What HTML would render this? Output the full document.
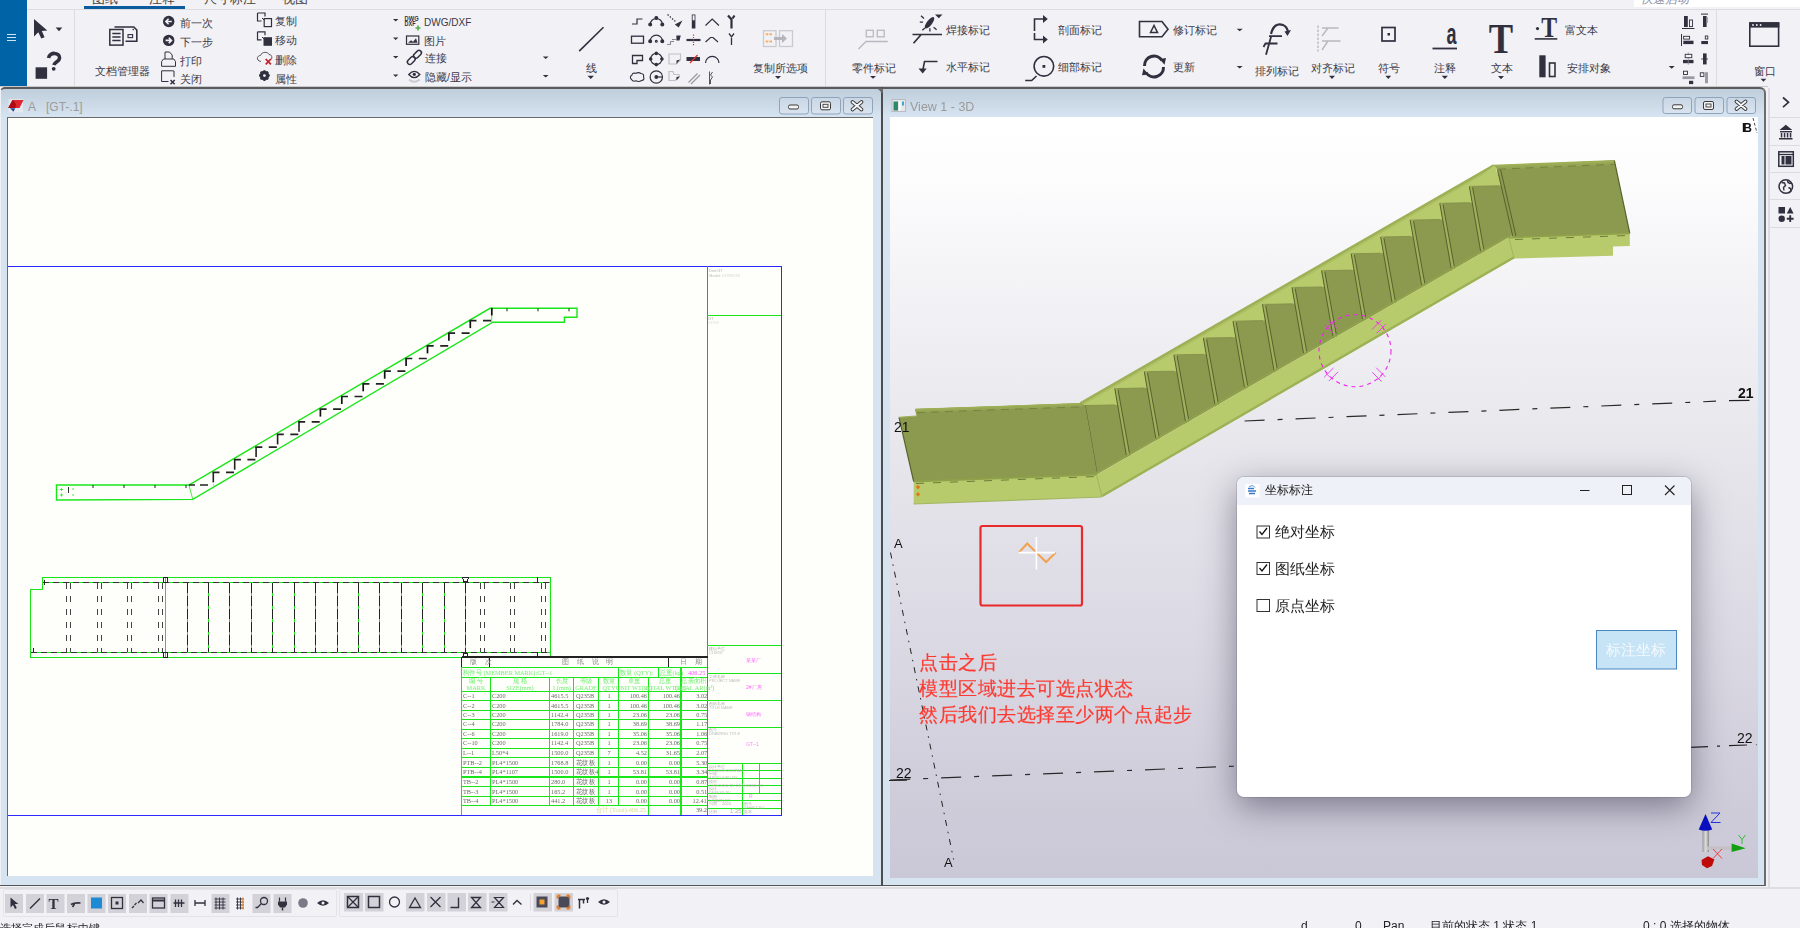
<!DOCTYPE html>
<html><head><meta charset="utf-8">
<style>
*{box-sizing:border-box;margin:0;padding:0}
html,body{width:1800px;height:928px;overflow:hidden}
body{position:relative;background:#f2f1f6;font-family:"Liberation Sans",sans-serif;color:#2b2b3a}
.a{position:absolute;white-space:nowrap}
.t{position:absolute;font-size:11px;line-height:12px;white-space:nowrap;color:#3a3a48}
.tri{position:absolute;width:0;height:0;border-left:3px solid transparent;border-right:3px solid transparent;border-top:3px solid #2f2f3d}
svg{position:absolute;left:0;top:0}
</style></head><body>

<!-- top tabs -->
<div class="a" style="left:0;top:0;width:1800px;height:9px;background:#f2f1f6;overflow:hidden">
  <div class="t" style="left:92px;top:-8px;font-size:13px;line-height:14px;color:#444">图纸</div>
  <div class="t" style="left:149px;top:-8px;font-size:13px;line-height:14px;color:#444">注释</div>
  <div class="t" style="left:204px;top:-8px;font-size:13px;line-height:14px;color:#444">尺寸标注</div>
  <div class="t" style="left:282px;top:-8px;font-size:13px;line-height:14px;color:#444">视图</div>
  <div class="a" style="left:1634px;top:0;width:166px;height:7px;background:#fff"></div>
  <div class="t" style="left:1641px;top:-7px;font-size:12px;color:#8a8aa0;font-style:italic">快速启动</div>
</div>
<div class="a" style="left:84px;top:6px;width:101px;height:3px;background:#0b5c9e"></div>
<div class="a" style="left:27px;top:9px;width:1773px;height:1px;background:#dddce2"></div>
<!-- sidebar -->
<div class="a" style="left:0;top:0;width:27px;height:86px;background:#0063a6"></div>
<div class="a" style="left:7px;top:34px;width:9px;height:1px;background:#cfe3f3;box-shadow:0 3px 0 #cfe3f3,0 6px 0 #cfe3f3"></div>

<!-- ribbon separators -->
<div class="a" style="left:74px;top:10px;width:1px;height:76px;background:#dcdbe1"></div>
<div class="a" style="left:1716px;top:10px;width:1px;height:76px;background:#dcdbe1"></div>


<!-- RIBBON ICONS -->
<svg width="1800" height="88" style="left:0;top:0" fill="none" stroke="#31303f" stroke-width="1.3">
  <!-- select arrow -->
  <path d="M34,19 L34,36.5 L38.3,32.2 L41.3,38.6 L44.6,37.2 L41.8,31 L47.3,30.6 Z" fill="#31303f" stroke="none"/>
  <path d="M55.7,27.6 L62.3,27.6 L59,31.2 Z" fill="#31303f" stroke="none"/>
  <!-- help -->
  <rect x="35.6" y="67.3" width="11.5" height="11.5" fill="#31303f" stroke="none"/>
  <path d="M48.6,58 C49.5,51.8 59.8,52 59.6,58 C59.5,61.5 54.8,61.5 53.8,65" stroke-width="3.6"/>
  <circle cx="53.7" cy="68.8" r="1.9" fill="#31303f" stroke="none"/>
  <!-- doc manager -->
  <path d="M114.5,27 L133.8,27 L136.8,30 L136.8,41.3 L125.5,41.3" stroke-width="1.6"/><circle cx="133.2" cy="29.6" r="0.8" fill="#31303f" stroke="none"/>
  <rect x="109.8" y="29.5" width="13.2" height="15.6" stroke-width="1.5" fill="#f2f1f6"/>
  <path d="M112.3,33.5h8.3M112.3,37h8.3M112.3,40.5h8.3" stroke-width="1.3"/>
  <rect x="128" y="34.6" width="4.6" height="3" stroke-width="1.1"/>
  <!-- prev/next -->
  <circle cx="168.7" cy="21.5" r="5.7" fill="#31303f" stroke="none"/>
  <path d="M171.8,21.5h-5.6M168.6,18.8l-2.7,2.7l2.7,2.7" stroke="#f2f1f6" stroke-width="1.6"/>
  <circle cx="168.7" cy="40.4" r="5.7" fill="#31303f" stroke="none"/>
  <path d="M165.6,40.4h5.6M168.8,37.7l2.7,2.7l-2.7,2.7" stroke="#f2f1f6" stroke-width="1.6"/>
  <!-- print -->
  <path d="M165,59 L165,52 L169.5,52 L172.2,55 L172.2,59 M161.6,66.3 L161.6,61.5 L163.5,59 L173.8,59 L175.5,61.5 L175.5,66.3 Z" stroke-width="1"/>
  <!-- close -->
  <path d="M174,77 L174,71 L172.5,70.8 L161.6,70.8 L161.6,81.5 L168.5,81.5" stroke-width="1"/>
  <path d="M170.5,80l4.2,4.2M174.7,80l-4.2,4.2" stroke-width="1.5"/>
  <!-- copy / move -->
  <path d="M257.5,13 h7.5 v3.5 M257.5,13 v8 h4" stroke-width="1.2"/>
  <rect x="264.2" y="18.6" width="7.3" height="8" stroke-width="1.2"/>
  <path d="M262,18 l2.5,2.5" stroke-width="1"/>
  <path d="M257.5,31.8 h7.5 v3.5 M257.5,31.8 v8 h4" stroke-width="1.2"/>
  <rect x="263.5" y="37.2" width="8.5" height="8.6" fill="#31303f" stroke="none"/>
  <path d="M262,37 l2.5,2.5" stroke-width="1"/>
  <!-- delete cloud -->
  <path d="M261,61.5 C256,61 256.5,55.5 260.5,55.5 C261.5,51.5 268,51.5 269,54.5 C272,54.5 272.5,58 271,59.5" stroke="#555" stroke-width="1"/>
  <path d="M265.7,59l5.2,5.4M270.9,59l-5.2,5.4" stroke="#c0262b" stroke-width="1.8"/>
  <!-- gear -->
  <circle cx="264.4" cy="75.6" r="3.6" stroke-width="2.4"/>
  <path d="M264.4,70.2v10.8M259,75.6h10.8M260.6,71.8l7.6,7.6M268.2,71.8l-7.6,7.6" stroke-width="2"/>
  <circle cx="264.4" cy="75.6" r="1.4" fill="#f2f1f6" stroke="none"/>
  <!-- triangles col3 -->
  <path d="M393,19h5.4l-2.7,2.6z M393,37.5h5.4l-2.7,2.6z M393,56h5.4l-2.7,2.6z M393,74.5h5.4l-2.7,2.6z M542.8,56.6h5.8l-2.9,2.4z M542.8,75h5.8l-2.9,2.6z M587.5,75.8h6.5l-3.25,3.2z" fill="#31303f" stroke="none"/>
  <!-- dwg icon -->
  <text x="404.6" y="20.5" font-family="Liberation Sans" font-size="6.5" font-weight="bold" fill="#31303f" stroke="none" textLength="14" lengthAdjust="spacingAndGlyphs">DWG</text>
  <text x="404.6" y="25.5" font-family="Liberation Sans" font-size="6.5" font-weight="bold" fill="#31303f" stroke="none" textLength="11" lengthAdjust="spacingAndGlyphs">DXF</text>
  <path d="M418,25.5v5M415.5,28h5" stroke="#54b04a" stroke-width="1.6"/>
  <!-- picture -->
  <rect x="406.5" y="36" width="12.3" height="8.3" stroke-width="1.2"/>
  <path d="M408,42.8 l3,-2.5 l2,1.5 l3,-3.5 l1.5,4.5 z" fill="#31303f" stroke="none"/>
  <!-- link -->
  <g transform="rotate(-45 414.4 57.4)" stroke-width="1.5"><rect x="405.5" y="55" width="9" height="4.8" rx="2.4"/><rect x="414.3" y="55" width="9" height="4.8" rx="2.4"/></g>
  <!-- eye -->
  <path d="M408.8,74.5 Q414.3,68.3 419.8,74.5 Q414.3,80.7 408.8,74.5Z" stroke-width="1.4"/>
  <circle cx="414.3" cy="74.3" r="1.6" fill="#31303f" stroke="none"/>
  <path d="M409,79.5 Q414.3,84 419.6,79.5" stroke="#c9c9cf" stroke-width="2"/>
  <!-- line -->
  <path d="M579.2,51.1 L603.5,27.3" stroke-width="1.6"/>
  <!-- grid icons -->
  <g stroke-width="1.2">
    <path d="M632,24h5v-5h5.5"/>
    <path d="M650.2,24.6 A6.1,6.1 0 0 1 662.4,24.6"/><circle cx="650.2" cy="24.6" r="1.4" fill="#31303f"/><circle cx="656.3" cy="18" r="1.4" fill="#31303f"/><circle cx="662.3" cy="24.6" r="1.4" fill="#31303f"/>
    <path d="M667.5,14.5 l8,7" stroke-dasharray="1.5,1.5"/><path d="M676,24.5 l5,-2.5 l-2.5,4.5 z" fill="#31303f"/>
    <rect x="691.8" y="14.5" width="3.6" height="14" fill="#31303f" stroke="none"/><rect x="692.6" y="15.3" width="2" height="5" fill="#f2f1f6" stroke="none"/>
    <path d="M705.5,25.5 l6.7,-6.5 l6.7,6.5"/>
    <path d="M728,15.5 l3.5,4 v9 M734.5,15.5 l-2,3" stroke-width="2.2"/>
    <rect x="631.5" y="36.2" width="12" height="7" stroke-width="1.3"/>
    <path d="M650.2,41.2 A6.1,6.1 0 0 1 662.4,41.2"/><circle cx="650.2" cy="41.2" r="1.4" fill="#31303f"/><circle cx="656.3" cy="41.2" r="0.9"/><circle cx="662.3" cy="41.2" r="1.4" fill="#31303f"/>
    <path d="M667.5,44.5h3v-3h2.5v-2h3" stroke-dasharray="1,1"/><path d="M677,36 h3 l-1,4 h-2z" fill="#31303f"/>
    <path d="M686.5,40h14" stroke-width="2.2"/><path d="M693.5,34.5v12" stroke="#d33" stroke-dasharray="1.2,1.2"/>
    <path d="M705.5,42 l5,-4.5 h2.5 l5,4.5"/>
    <path d="M731.5,38v7 M729,33.5 l2.5,3.5 l2.5,-3.5" stroke-width="1.3"/>
    <path d="M632.5,63.5 v-8 h10 v5 h-5.5 v3z" stroke-width="1.3"/>
    <circle cx="656.3" cy="59" r="5.6"/><circle cx="656.3" cy="53.4" r="1.2" fill="#31303f"/><circle cx="650.7" cy="59" r="1.2" fill="#31303f"/><circle cx="661.9" cy="59" r="1.2" fill="#31303f"/><circle cx="656.3" cy="64.6" r="1.2" fill="#31303f"/>
    <path d="M669,54 h11.5 v6 l-4,4 h-7.5z" stroke="#c0c0c6"/><path d="M680,59.5 l-3.5,4.5 v-3.5z" fill="#31303f" stroke="none"/>
    <rect x="686.5" y="57" width="13.5" height="4" fill="#31303f" stroke="none"/><path d="M690,63 l7.5,-8" stroke="#d33"/>
    <path d="M705.5,63 a6.7,6.5 0 0 1 13.5,0"/>
    <path d="M631.5,79.5 Q629,77 632,75 Q632.5,72.5 636,73.3 Q638.5,71.8 641,73.5 Q644.5,74 643.5,77 Q645,80 641.5,80.5 Q639,82.3 636,80.8 Q633,82 631.5,79.5z" stroke-width="1.1"/>
    <circle cx="656.3" cy="77" r="6.2"/><circle cx="656.3" cy="77" r="1.3" fill="#31303f"/><path d="M656.3,77h6"/>
    <path d="M669,71.5 h4 l1,3 h5 v2 l-4,4 h-6z" stroke="#c0c0c6"/><path d="M680,76.5 l-3.5,4 v-3.5z" fill="#31303f" stroke="none"/>
    <path d="M688.5,82.5 l9,-9 M691,84 l9,-9" stroke="#999"/>
    <path d="M709.5,71.5 v13 M712.5,72 l-2,3 l2,2 l-2,3 v4" stroke="#555" stroke-width="1"/>
  </g>
  <!-- copy selected -->
  <rect x="763.5" y="30.7" width="12.5" height="15.8" stroke="#cacad0" stroke-width="1.3"/>
  <rect x="779.5" y="30.7" width="13" height="15.8" stroke="#cacad0" stroke-width="1.3"/>
  <path d="M774,38.5h9" stroke="#b5b5bb" stroke-width="3"/><path d="M782,34l5,4.5l-5,4.5z" fill="#b5b5bb" stroke="none"/>
  <path d="M765.8,34.3h2.5M769.5,34.3h2.5M765.8,41.4h2.5M769.5,41.4h2.5" stroke="#f5b062" stroke-width="2"/>
  <path d="M775,76h6l-3,3z M870,76h6l-3,2.8z M1329,75.8h6l-3,3.2z M1385.4,75.8h5.8l-2.9,3.2z M1441.7,75.8h6.3l-3.15,3.2z M1498,76h6l-3,3.3z M1236.7,28.7h6l-3,2.6z M1236.7,66h6l-3,2.6z M1668.7,66h6l-3,2.7z M1760.6,78.8h5.7l-2.85,2.9z" fill="#31303f" stroke="none"/>
  <!-- separator -->
  <path d="M825.5,10v76" stroke="#dcdbe1" stroke-width="1"/>
  <!-- part mark -->
  <g stroke="#b9b9bf" stroke-width="1.3"><rect x="866.3" y="30.3" width="7" height="6.5"/><rect x="877.2" y="30.3" width="7" height="6.5"/><path d="M858.5,49 l7.5,-7.5 h21.7"/></g>
  <!-- weld -->
  <path d="M912.5,34.5 h29.5 M913.5,43.3 l7.5,-8.5" stroke-width="1.7"/>
  <ellipse cx="929.5" cy="22.8" rx="7" ry="2.6" transform="rotate(-52 929.5 22.8)" fill="#31303f" stroke="none"/>
  <path d="M935,14.5h7.5l-3.7,3.7z" fill="#31303f" stroke="none"/>
  <path d="M921,15.8 l3,2.8 M919.8,22.2 h3.2 M922.3,30.3 l2.6,-2.3 M929.9,28.3 v3.2 M933.6,27.2 l3,2.6" stroke-width="1.3"/>
  <!-- level mark -->
  <path d="M937.5,61.5 h-13 l-1.8,9.5" stroke-width="1.6"/><path d="M918.5,68.5 l4.2,5 l4,-5z" fill="#31303f" stroke="none"/>
  <!-- section mark -->
  <path d="M1034.5,31 v-12 h9 M1034.5,33 v6.5 h9" stroke-width="1.6"/>
  <path d="M1043,15 l4.8,4 l-4.8,4z M1043,35.5 l4.8,4 l-4.8,4z" fill="#31303f" stroke="none"/>
  <!-- detail mark -->
  <circle cx="1043.9" cy="66.3" r="9.8" stroke-width="1.6"/><rect x="1042.5" y="65" width="2.8" height="2.8" fill="#31303f" stroke="none"/>
  <path d="M1025.2,80.5 h6.5 l4.8,-4.5" stroke-width="1.6"/>
  <!-- revision -->
  <path d="M1139.5,21.5 h22.5 l6,7.8 l-6,7.5 h-22.5z" stroke-width="1.6"/>
  <path d="M1150.5,32.5 l3.5,-7 l3.5,7z" stroke-width="1.5"/>
  <!-- update -->
  <path d="M1144.5,66 a9.5,9.5 0 0 1 17.5,-5.5 M1163.5,67 a9.5,9.5 0 0 1 -17.5,5.5" stroke-width="3"/>
  <path d="M1159.5,59 l6.5,-1 l-1.5,6.8z M1148.5,74.5 l-6.5,0.8 l1.5,-6.8z" fill="#31303f" stroke="none"/>
  <!-- arrange mark -->
  <path d="M1271,34 Q1274,22 1283,25 Q1287,26.5 1288,32" stroke-width="2.2"/><path d="M1284.5,31.5 l6.5,-1.5 l-3.5,6z" fill="#31303f" stroke="none"/>
  <path d="M1269,36.2 h13 M1263.5,47 l2,-3.5 h12 M1266,54.7 l5.2,-18.5" stroke-width="1.8"/>
  <!-- align mark -->
  <g stroke="#b8b8be" stroke-width="1.4"><path d="M1318,25.5v26" stroke-dasharray="2.5,1.5"/><path d="M1322,28h16.5M1322,41h18.5M1322,36l6,-8M1322,50l6,-9"/></g>
  <!-- symbol -->
  <rect x="1382" y="27.5" width="13" height="13.5" stroke-width="1.7"/><rect x="1387.5" y="33" width="2.5" height="2.5" fill="#31303f" stroke="none"/>
  <!-- note a -->
  <path d="M1432.5,48.5h24.5" stroke-width="1.8"/>
  <text x="1446.5" y="44" font-family="Liberation Sans" font-weight="bold" font-size="29" fill="#31303f" stroke="none" transform="translate(1446.5 0) scale(0.62 1) translate(-1446.5 0)">a</text>
  <!-- T -->
  <text x="1488.7" y="52.7" font-family="Liberation Serif" font-weight="bold" font-size="43" fill="#31303f" stroke="none" transform="translate(1488.7 0) scale(0.85 1) translate(-1488.7 0)">T</text>
  <text x="1541.3" y="36.8" font-family="Liberation Serif" font-weight="bold" font-size="29" fill="#31303f" stroke="none" transform="translate(1541.3 0) scale(0.82 1) translate(-1541.3 0)">T</text>
  <circle cx="1537.5" cy="28.6" r="1.6" fill="#31303f" stroke="none"/>
  <path d="M1534.7,38.9h22.6" stroke-width="1.6"/>
  <!-- arrange objects -->
  <rect x="1539.3" y="55.3" width="6.3" height="22" fill="#31303f" stroke="none"/>
  <rect x="1549.5" y="63" width="5.5" height="13.5" stroke-width="1.6"/>
  <!-- align icons -->
  <g fill="#31303f" stroke="none">
    <rect x="1684" y="16" width="3.8" height="11"/><rect x="1682" y="28" width="12.5" height="1"/>
    <rect x="1703" y="16" width="3.6" height="11"/><rect x="1701" y="13.6" width="7" height="1"/><rect x="1706.6" y="17" width="1.2" height="6" fill="#9a9aa4"/>
    <rect x="1681" y="34" width="1" height="12"/><rect x="1683.3" y="40.7" width="10.2" height="3.4"/>
    <rect x="1701.3" y="41" width="6.7" height="3.1"/>
    <rect x="1683" y="59.9" width="10.5" height="3.3"/><rect x="1687.8" y="52.5" width="0.8" height="12.3" fill="#8a8a96"/>
    <rect x="1703" y="53.4" width="3.6" height="11"/><rect x="1701" y="58.6" width="7" height="0.8"/>
    <rect x="1682.5" y="76.3" width="12" height="2.8" fill="#9a9aa4"/><rect x="1689" y="80.8" width="4.2" height="3.3"/>
    <rect x="1705" y="72.2" width="3" height="11" fill="#9a9aa4"/>
  </g>
  <g fill="#f4f4f8" stroke="#31303f" stroke-width="0.9">
    <rect x="1689.5" y="20" width="3" height="6.6"/>
    <rect x="1683.6" y="36.3" width="6" height="2.8"/>
    <rect x="1705.3" y="36" width="2.5" height="3"/>
    <rect x="1685.2" y="54.3" width="6.6" height="3.4"/>
    <rect x="1683.5" y="71.2" width="4" height="3.3"/>
    <rect x="1700.3" y="72.8" width="3.6" height="3.6"/>
  </g>
  <!-- window -->
  <rect x="1749.8" y="23" width="28.8" height="23.2" stroke-width="1.6"/>
  <rect x="1749" y="22.3" width="30.3" height="5.3" fill="#31303f" stroke="none"/>
  <circle cx="1753" cy="25" r="0.9" fill="#f2f1f6" stroke="none"/><circle cx="1756.8" cy="25" r="0.9" fill="#f2f1f6" stroke="none"/><circle cx="1760.6" cy="25" r="0.9" fill="#f2f1f6" stroke="none"/>
</svg>
<div class="t" style="left:95px;top:65px;font-size:10.5px">文档管理器</div>
<div class="t" style="left:180px;top:17px;font-size:10.5px">前一次</div>
<div class="t" style="left:180px;top:36px;font-size:10.5px">下一步</div>
<div class="t" style="left:180px;top:55px;font-size:10.5px">打印</div>
<div class="t" style="left:180px;top:73px;font-size:10.5px">关闭</div>
<div class="t" style="left:275px;top:15px;font-size:10.5px">复制</div>
<div class="t" style="left:275px;top:34px;font-size:10.5px">移动</div>
<div class="t" style="left:275px;top:54px;font-size:10.5px">删除</div>
<div class="t" style="left:275px;top:73px;font-size:10.5px">属性</div>
<div class="t" style="left:424px;top:16px;font-size:11px;transform:scaleX(.91);transform-origin:0 0">DWG/DXF</div>
<div class="t" style="left:424px;top:35px;font-size:10.5px">图片</div>
<div class="t" style="left:425px;top:52px;font-size:10.5px">连接</div>
<div class="t" style="left:425px;top:71px;font-size:10.5px">隐藏/显示</div>
<div class="t" style="left:586px;top:62px;font-size:10.5px">线</div>
<div class="t" style="left:753px;top:62px;font-size:10.5px">复制所选项</div>
<div class="t" style="left:852px;top:62px;font-size:10.5px">零件标记</div>
<div class="t" style="left:946px;top:24px;font-size:10.5px">焊接标记</div>
<div class="t" style="left:946px;top:61px;font-size:10.5px">水平标记</div>
<div class="t" style="left:1058px;top:24px;font-size:10.5px">剖面标记</div>
<div class="t" style="left:1058px;top:61px;font-size:10.5px">细部标记</div>
<div class="t" style="left:1173px;top:24px;font-size:10.5px">修订标记</div>
<div class="t" style="left:1173px;top:61px;font-size:10.5px">更新</div>
<div class="t" style="left:1255px;top:65px;font-size:10.5px">排列标记</div>
<div class="t" style="left:1311px;top:62px;font-size:10.5px">对齐标记</div>
<div class="t" style="left:1378px;top:62px;font-size:10.5px">符号</div>
<div class="t" style="left:1434px;top:62px;font-size:10.5px">注释</div>
<div class="t" style="left:1491px;top:62px;font-size:10.5px">文本</div>
<div class="t" style="left:1565px;top:24px;font-size:10.5px">富文本</div>
<div class="t" style="left:1567px;top:62px;font-size:10.5px">安排对象</div>
<div class="t" style="left:1754px;top:65px;font-size:10.5px">窗口</div>

<!-- dark line under ribbon -->
<div class="a" style="left:0;top:86px;width:1768px;height:1px;background:#c9c8cc"></div>

<!-- LEFT WINDOW -->
<div class="a" style="left:0;top:87px;width:882px;height:799px;background:linear-gradient(#bfcedc 0px,#d7e4f1 29px,#d6e3f0 30px);border-top:2px solid #5b5b5b;border-bottom:1px solid #555;border-top-left-radius:5px"></div>
<div class="a" style="left:0;top:89px;width:1px;height:796px;background:#eef2f7"></div>
<div class="a" style="left:7px;top:117px;width:866px;height:759px;background:#fefefa;border-top:1.5px solid #6a6a6a;border-left:1.5px solid #6a6a6a"></div>
<div class="t" style="left:28px;top:101px;font-size:12px;line-height:13px;color:#9b9b9b">A&nbsp;&nbsp;&nbsp;[GT-.1]</div>

<!-- DRAWING -->
<svg width="1800" height="928" style="left:0;top:0" fill="none" shape-rendering="crispEdges">
<path d="M8,266.5H781.5V815.5H8" stroke="#2a2aff" stroke-width="1.5"/>
<path d="M707.5,266V815" stroke="#8a7a10" stroke-width="1.3"/>
<path d="M707,315.5H781" stroke="#19e619" stroke-width="1.2"/>
<path d="M707,645.5H781" stroke="#19e619" stroke-width="1.2"/>
<path d="M707,673.5H781" stroke="#19e619" stroke-width="1.2"/>
<path d="M707,700.5H781" stroke="#19e619" stroke-width="1.2"/>
<path d="M707,727.5H781" stroke="#19e619" stroke-width="1.2"/>
<path d="M707,763.5H781" stroke="#19e619" stroke-width="1.2"/>
<path d="M707,770.5H781" stroke="#19e619" stroke-width="1.2"/>
<path d="M707,778.5H781" stroke="#19e619" stroke-width="1.2"/>
<path d="M707,785.5H781" stroke="#19e619" stroke-width="1.2"/>
<path d="M707,793.5H781" stroke="#19e619" stroke-width="1.2"/>
<path d="M707,800.5H781" stroke="#19e619" stroke-width="1.2"/>
<path d="M707,808.5H781" stroke="#19e619" stroke-width="1.2"/>
<path d="M742.5,763V815M759.5,763V793" stroke="#19e619" stroke-width="1.2"/>
</svg>
<svg width="1800" height="928" style="left:0;top:0" fill="none">
<path d="M56.5,485H188.9L490,308.3H577V317.2H564.4V322.2H492.8L192.8,499.4L56.5,500Z" stroke="#19e619" stroke-width="1.4"/>
<path d="M188.9,485L192.8,499.4M491.7,308.5V322" stroke="#19e619" stroke-width="0.8"/>
<path d="M213.3,472.4V485.0" stroke="#222" stroke-width="1.6" stroke-dasharray="10,3"/>
<path d="M212.5,472.4H234.7" stroke="#222" stroke-width="1.7" stroke-dasharray="7,6.5,8,10"/>
<path d="M234.7,459.7V472.4" stroke="#222" stroke-width="1.6" stroke-dasharray="10,3"/>
<path d="M233.9,459.7H256.1" stroke="#222" stroke-width="1.7" stroke-dasharray="7,6.5,8,10"/>
<path d="M256.1,447.1V459.7" stroke="#222" stroke-width="1.6" stroke-dasharray="10,3"/>
<path d="M255.3,447.1H277.6" stroke="#222" stroke-width="1.7" stroke-dasharray="7,6.5,8,10"/>
<path d="M277.6,434.4V447.1" stroke="#222" stroke-width="1.6" stroke-dasharray="10,3"/>
<path d="M276.8,434.4H299.0" stroke="#222" stroke-width="1.7" stroke-dasharray="7,6.5,8,10"/>
<path d="M299.0,421.8V434.4" stroke="#222" stroke-width="1.6" stroke-dasharray="10,3"/>
<path d="M298.2,421.8H320.4" stroke="#222" stroke-width="1.7" stroke-dasharray="7,6.5,8,10"/>
<path d="M320.4,409.1V421.8" stroke="#111" stroke-width="1.7" stroke-dasharray="7.5,6"/>
<path d="M319.6,409.1H341.8" stroke="#222" stroke-width="1.7" stroke-dasharray="7,6.5,8,10"/>
<path d="M341.8,396.5V409.1" stroke="#111" stroke-width="1.7" stroke-dasharray="7.5,6"/>
<path d="M341.0,396.5H363.2" stroke="#222" stroke-width="1.7" stroke-dasharray="7,6.5,8,10"/>
<path d="M363.2,383.8V396.4" stroke="#111" stroke-width="1.7" stroke-dasharray="7.5,6"/>
<path d="M362.4,383.8H384.7" stroke="#222" stroke-width="1.7" stroke-dasharray="7,6.5,8,10"/>
<path d="M384.7,371.2V383.8" stroke="#111" stroke-width="1.7" stroke-dasharray="7.5,6"/>
<path d="M383.9,371.2H406.1" stroke="#222" stroke-width="1.7" stroke-dasharray="7,6.5,8,10"/>
<path d="M406.1,358.5V371.1" stroke="#111" stroke-width="1.7" stroke-dasharray="7.5,6"/>
<path d="M405.3,358.5H427.5" stroke="#222" stroke-width="1.7" stroke-dasharray="7,6.5,8,10"/>
<path d="M427.5,345.9V358.5" stroke="#111" stroke-width="1.7" stroke-dasharray="7.5,6"/>
<path d="M426.7,345.9H448.9" stroke="#222" stroke-width="1.7" stroke-dasharray="7,6.5,8,10"/>
<path d="M448.9,333.2V345.9" stroke="#111" stroke-width="1.7" stroke-dasharray="7.5,6"/>
<path d="M448.1,333.2H470.3" stroke="#222" stroke-width="1.7" stroke-dasharray="7,6.5,8,10"/>
<path d="M470.3,320.6V333.2" stroke="#111" stroke-width="1.7" stroke-dasharray="7.5,6"/>
<path d="M469.5,320.6H491.8" stroke="#222" stroke-width="1.7" stroke-dasharray="7,6.5,8,10"/>
<path d="M491.8,307.9V320.5" stroke="#111" stroke-width="1.7" stroke-dasharray="7.5,6"/>
<path d="M189,485H213.3" stroke="#222" stroke-width="1.7" stroke-dasharray="6,5,8,5"/>

<path d="M93,485v3" stroke="#222" stroke-width="1"/>
<path d="M124,485v3" stroke="#222" stroke-width="1"/>
<path d="M155,485v3" stroke="#222" stroke-width="1"/>
<path d="M186,485v3" stroke="#222" stroke-width="1"/>
<path d="M507,308.3v3" stroke="#222" stroke-width="1"/>
<path d="M538,308.3v3" stroke="#222" stroke-width="1"/>
<path d="M569,308.3v3" stroke="#222" stroke-width="1"/>
<path d="M60,489.5h3M61.5,488v3M60,495h3M61.5,493.5v3M72,489h2M72,495h2" stroke="#19e619" stroke-width="0.8"/>
<path d="M68.5,487v6" stroke="#333" stroke-width="1"/>
</svg>
<svg width="1800" height="928" style="left:0;top:0" fill="none" shape-rendering="crispEdges">
<path d="M42.5,589.5V577.5H550.5V657.5H30.5V589.5Z" stroke="#19e619" stroke-width="1.3"/>
<path d="M42.5,582.5H550.5M30.5,652.5H550.5" stroke="#19e619" stroke-width="1"/>
<path d="M42.5,582.5H550.5M30.5,652.5H550.5" stroke="#333" stroke-width="1" stroke-dasharray="6,4"/>
<path d="M165.5,577V657.5" stroke="#19e619" stroke-width="1.2"/>
<path d="M187,583V652M208.5,583V652M229.5,583V652M251.5,583V652M272.5,583V652M294,583V652M315.5,583V652M337,583V652M358.5,583V652M379.5,583V652M401,583V652M422.5,583V652M444,583V652M465.5,583V652" stroke="#19e619" stroke-width="1"/>
<path d="M187,583V652M208.5,583V652M229.5,583V652M251.5,583V652M272.5,583V652M294,583V652M315.5,583V652M337,583V652M358.5,583V652M379.5,583V652M401,583V652M422.5,583V652M444,583V652M465.5,583V652" stroke="#222" stroke-width="1" stroke-dasharray="10,3"/>
<path d="M66.5,583V652M70.0,583V652M97.5,583V652M101.0,583V652M127.5,583V652M131.0,583V652M158.5,583V652M162.0,583V652M480.5,583V652M484.0,583V652M510.5,583V652M514.0,583V652M541.5,583V652M545.0,583V652" stroke="#444" stroke-width="1" stroke-dasharray="6,7"/>
<path d="M163.5,577.5h4v5h-4zM163.5,652.5h4v5h-4z" stroke="#222" stroke-width="1"/>
<path d="M462.5,577.5h6l-1.5,4h-3zM462.5,657h6l-1.5,-4h-3z" stroke="#222" stroke-width="1"/>
<path d="M537.5,577V582M537.5,652V657M44.5,580v5M33.5,648v4" stroke="#222" stroke-width="1"/>
</svg>
<!-- TBTEXT -->
<div class="a" style="left:0;top:0;font-size:4px;line-height:4.5px;color:#999;white-space:nowrap;opacity:.75">
<div class="a" style="left:709px;top:269px">Drw:GT</div><div class="a" style="left:709px;top:273.5px;color:#aaa">Model: ########</div>
<div class="a" style="left:708px;top:317px">GT</div><div class="a" style="left:708px;top:321px;color:#bbb">#####</div>
<div class="a" style="left:709px;top:647px">建设单位</div><div class="a" style="left:709px;top:651px;color:#aaa">CLIENT</div>
<div class="a" style="left:709px;top:675px">工程名称</div><div class="a" style="left:709px;top:679px;color:#aaa">PROJECT NAME</div>
<div class="a" style="left:709px;top:702px">图纸名称</div><div class="a" style="left:709px;top:706px;color:#aaa">TITLE NAME</div>
<div class="a" style="left:709px;top:728px">图号</div><div class="a" style="left:709px;top:732px;color:#aaa">DRAWING TITLE</div>
<div class="a" style="left:709px;top:765px">设计单位</div><div class="a" style="left:709px;top:769px;color:#aaa">DESIGN COMPANY</div>
<div class="a" style="left:709px;top:772px">审核</div><div class="a" style="left:709px;top:776px;color:#aaa">APPROVED BY</div>
<div class="a" style="left:709px;top:780px">校对</div><div class="a" style="left:709px;top:784px;color:#aaa">CHECKED BY DESIGNED BY</div>
<div class="a" style="left:709px;top:787px">设计</div><div class="a" style="left:709px;top:791px;color:#aaa">DESIGN BY</div>
<div class="a" style="left:709px;top:795px">制图</div><div class="a" style="left:709px;top:799px;color:#aaa">DRAWN BY</div>
<div class="a" style="left:709px;top:802px">日期</div><div class="a" style="left:722px;top:802px">2024</div>
<div class="a" style="left:709px;top:810px">比例</div><div class="a" style="left:730px;top:809px;font-size:6px">1:25</div>
<div class="a" style="left:744px;top:802px">图号</div><div class="a" style="left:744px;top:806px;color:#aaa">SHEET NO</div>
<div class="a" style="left:744px;top:810px">版本</div>
</div>
<div class="a" style="left:746px;top:657px;font-size:5px;line-height:6px;color:#f6f;white-space:nowrap">某某厂</div>
<div class="a" style="left:746px;top:684px;font-size:5px;line-height:6px;color:#f6f;white-space:nowrap">2#厂房</div>
<div class="a" style="left:746px;top:711px;font-size:5px;line-height:6px;color:#f6f;white-space:nowrap">钢结构</div>
<div class="a" style="left:746px;top:741px;font-size:5px;line-height:6px;color:#f8f;white-space:nowrap">GT--1</div>
<div class="a" style="left:749px;top:793px;font-size:5px;line-height:6px;color:#f8f;white-space:nowrap">R</div>
<!-- /TBTEXT -->
<!-- TABLE -->
<svg width="1800" height="928" style="left:0;top:0" fill="none" shape-rendering="crispEdges">
<path d="M461.5,657H707.5M461.5,657V668M489.5,657V668M668.5,657V668" stroke="#222" stroke-width="1.3"/>
<path d="M461.5,667.7H707M461.5,677.4H707M461.5,691.4H707M461.5,700.7H707M461.5,710.2H707M461.5,719.5H707M461.5,729.2H707M461.5,738.5H707M461.5,748.2H707M461.5,757.8H707M461.5,767.6H707M461.5,777.1H707M461.5,786.7H707M461.5,796.2H707M461.5,805.5H707" stroke="#19e619" stroke-width="1.3"/>
<path d="M461.5,667V815" stroke="#19e619" stroke-width="1.3"/>
<path d="M490.3,677.4V805.5M549.5,677.4V805.5M573.3,677.4V805.5M598.5,677.4V805.5M618.5,677.4V805.5M648.4,677.4V805.5M681.0,677.4V805.5" stroke="#19e619" stroke-width="1.3"/>
<path d="M618.5,667.7V677.4M658.3,667.7V677.4M681,667.7V677.4M648.4,805.5V815M681,805.5V815" stroke="#19e619" stroke-width="1.3"/>
</svg>
<div class="a" style="left:0;top:0;font-family:'Liberation Serif',serif;font-size:7px;line-height:8px;color:#6a6a6a;white-space:nowrap">
<div class="a" style="left:463px;top:692.2px;transform:scaleX(.9);transform-origin:0 0;">C--1</div>
<div class="a" style="left:491.5px;top:692.2px;transform:scaleX(.9);transform-origin:0 0;">C200</div>
<div class="a" style="left:551px;top:692.2px;transform:scaleX(.9);transform-origin:0 0;">4615.5</div>
<div class="a" style="left:576px;top:692.2px;transform:scaleX(.9);transform-origin:0 0;">Q235B</div>
<div class="a" style="left:578.5px;top:692.2px;width:60px;text-align:center;transform:scaleX(.9);transform-origin:50% 0;">1</div>
<div class="a" style="left:586.5px;top:692.2px;width:60px;text-align:right;transform:scaleX(.9);transform-origin:100% 0;">100.46</div>
<div class="a" style="left:619.5px;top:692.2px;width:60px;text-align:right;transform:scaleX(.9);transform-origin:100% 0;">100.46</div>
<div class="a" style="left:681px;top:692.2px;width:26px;height:9px;overflow:hidden"><div style="position:absolute;right:0;top:0;transform:scaleX(.9);transform-origin:100% 0">3.02</div></div>
<div class="a" style="left:463px;top:701.5px;transform:scaleX(.9);transform-origin:0 0;">C--2</div>
<div class="a" style="left:491.5px;top:701.5px;transform:scaleX(.9);transform-origin:0 0;">C200</div>
<div class="a" style="left:551px;top:701.5px;transform:scaleX(.9);transform-origin:0 0;">4615.5</div>
<div class="a" style="left:576px;top:701.5px;transform:scaleX(.9);transform-origin:0 0;">Q235B</div>
<div class="a" style="left:578.5px;top:701.5px;width:60px;text-align:center;transform:scaleX(.9);transform-origin:50% 0;">1</div>
<div class="a" style="left:586.5px;top:701.5px;width:60px;text-align:right;transform:scaleX(.9);transform-origin:100% 0;">100.46</div>
<div class="a" style="left:619.5px;top:701.5px;width:60px;text-align:right;transform:scaleX(.9);transform-origin:100% 0;">100.46</div>
<div class="a" style="left:681px;top:701.5px;width:26px;height:9px;overflow:hidden"><div style="position:absolute;right:0;top:0;transform:scaleX(.9);transform-origin:100% 0">3.02</div></div>
<div class="a" style="left:463px;top:711.0px;transform:scaleX(.9);transform-origin:0 0;">C--3</div>
<div class="a" style="left:491.5px;top:711.0px;transform:scaleX(.9);transform-origin:0 0;">C200</div>
<div class="a" style="left:551px;top:711.0px;transform:scaleX(.9);transform-origin:0 0;">1142.4</div>
<div class="a" style="left:576px;top:711.0px;transform:scaleX(.9);transform-origin:0 0;">Q235B</div>
<div class="a" style="left:578.5px;top:711.0px;width:60px;text-align:center;transform:scaleX(.9);transform-origin:50% 0;">1</div>
<div class="a" style="left:586.5px;top:711.0px;width:60px;text-align:right;transform:scaleX(.9);transform-origin:100% 0;">23.06</div>
<div class="a" style="left:619.5px;top:711.0px;width:60px;text-align:right;transform:scaleX(.9);transform-origin:100% 0;">23.06</div>
<div class="a" style="left:681px;top:711.0px;width:26px;height:9px;overflow:hidden"><div style="position:absolute;right:0;top:0;transform:scaleX(.9);transform-origin:100% 0">0.75</div></div>
<div class="a" style="left:463px;top:720.3px;transform:scaleX(.9);transform-origin:0 0;">C--4</div>
<div class="a" style="left:491.5px;top:720.3px;transform:scaleX(.9);transform-origin:0 0;">C200</div>
<div class="a" style="left:551px;top:720.3px;transform:scaleX(.9);transform-origin:0 0;">1784.0</div>
<div class="a" style="left:576px;top:720.3px;transform:scaleX(.9);transform-origin:0 0;">Q235B</div>
<div class="a" style="left:578.5px;top:720.3px;width:60px;text-align:center;transform:scaleX(.9);transform-origin:50% 0;">1</div>
<div class="a" style="left:586.5px;top:720.3px;width:60px;text-align:right;transform:scaleX(.9);transform-origin:100% 0;">38.69</div>
<div class="a" style="left:619.5px;top:720.3px;width:60px;text-align:right;transform:scaleX(.9);transform-origin:100% 0;">38.69</div>
<div class="a" style="left:681px;top:720.3px;width:26px;height:9px;overflow:hidden"><div style="position:absolute;right:0;top:0;transform:scaleX(.9);transform-origin:100% 0">1.17</div></div>
<div class="a" style="left:463px;top:730.0px;transform:scaleX(.9);transform-origin:0 0;">C--6</div>
<div class="a" style="left:491.5px;top:730.0px;transform:scaleX(.9);transform-origin:0 0;">C200</div>
<div class="a" style="left:551px;top:730.0px;transform:scaleX(.9);transform-origin:0 0;">1619.0</div>
<div class="a" style="left:576px;top:730.0px;transform:scaleX(.9);transform-origin:0 0;">Q235B</div>
<div class="a" style="left:578.5px;top:730.0px;width:60px;text-align:center;transform:scaleX(.9);transform-origin:50% 0;">1</div>
<div class="a" style="left:586.5px;top:730.0px;width:60px;text-align:right;transform:scaleX(.9);transform-origin:100% 0;">35.06</div>
<div class="a" style="left:619.5px;top:730.0px;width:60px;text-align:right;transform:scaleX(.9);transform-origin:100% 0;">35.06</div>
<div class="a" style="left:681px;top:730.0px;width:26px;height:9px;overflow:hidden"><div style="position:absolute;right:0;top:0;transform:scaleX(.9);transform-origin:100% 0">1.06</div></div>
<div class="a" style="left:463px;top:739.3px;transform:scaleX(.9);transform-origin:0 0;">C--10</div>
<div class="a" style="left:491.5px;top:739.3px;transform:scaleX(.9);transform-origin:0 0;">C200</div>
<div class="a" style="left:551px;top:739.3px;transform:scaleX(.9);transform-origin:0 0;">1142.4</div>
<div class="a" style="left:576px;top:739.3px;transform:scaleX(.9);transform-origin:0 0;">Q235B</div>
<div class="a" style="left:578.5px;top:739.3px;width:60px;text-align:center;transform:scaleX(.9);transform-origin:50% 0;">1</div>
<div class="a" style="left:586.5px;top:739.3px;width:60px;text-align:right;transform:scaleX(.9);transform-origin:100% 0;">23.06</div>
<div class="a" style="left:619.5px;top:739.3px;width:60px;text-align:right;transform:scaleX(.9);transform-origin:100% 0;">23.06</div>
<div class="a" style="left:681px;top:739.3px;width:26px;height:9px;overflow:hidden"><div style="position:absolute;right:0;top:0;transform:scaleX(.9);transform-origin:100% 0">0.75</div></div>
<div class="a" style="left:463px;top:749.0px;transform:scaleX(.9);transform-origin:0 0;">L--1</div>
<div class="a" style="left:491.5px;top:749.0px;transform:scaleX(.9);transform-origin:0 0;">L50*4</div>
<div class="a" style="left:551px;top:749.0px;transform:scaleX(.9);transform-origin:0 0;">1500.0</div>
<div class="a" style="left:576px;top:749.0px;transform:scaleX(.9);transform-origin:0 0;">Q235B</div>
<div class="a" style="left:578.5px;top:749.0px;width:60px;text-align:center;transform:scaleX(.9);transform-origin:50% 0;">7</div>
<div class="a" style="left:586.5px;top:749.0px;width:60px;text-align:right;transform:scaleX(.9);transform-origin:100% 0;">4.52</div>
<div class="a" style="left:619.5px;top:749.0px;width:60px;text-align:right;transform:scaleX(.9);transform-origin:100% 0;">31.65</div>
<div class="a" style="left:681px;top:749.0px;width:26px;height:9px;overflow:hidden"><div style="position:absolute;right:0;top:0;transform:scaleX(.9);transform-origin:100% 0">2.07</div></div>
<div class="a" style="left:463px;top:758.6px;transform:scaleX(.9);transform-origin:0 0;">PTB--2</div>
<div class="a" style="left:491.5px;top:758.6px;transform:scaleX(.9);transform-origin:0 0;">PL4*1500</div>
<div class="a" style="left:551px;top:758.6px;transform:scaleX(.9);transform-origin:0 0;">1768.8</div>
<div class="a" style="left:576px;top:758.6px;transform:scaleX(.9);transform-origin:0 0;">花纹板</div>
<div class="a" style="left:578.5px;top:758.6px;width:60px;text-align:center;transform:scaleX(.9);transform-origin:50% 0;">1</div>
<div class="a" style="left:586.5px;top:758.6px;width:60px;text-align:right;transform:scaleX(.9);transform-origin:100% 0;">0.00</div>
<div class="a" style="left:619.5px;top:758.6px;width:60px;text-align:right;transform:scaleX(.9);transform-origin:100% 0;">0.00</div>
<div class="a" style="left:681px;top:758.6px;width:26px;height:9px;overflow:hidden"><div style="position:absolute;right:0;top:0;transform:scaleX(.9);transform-origin:100% 0">5.30</div></div>
<div class="a" style="left:463px;top:768.4px;transform:scaleX(.9);transform-origin:0 0;">PTB--4</div>
<div class="a" style="left:491.5px;top:768.4px;transform:scaleX(.9);transform-origin:0 0;">PL4*1107</div>
<div class="a" style="left:551px;top:768.4px;transform:scaleX(.9);transform-origin:0 0;">1500.0</div>
<div class="a" style="left:576px;top:768.4px;transform:scaleX(.9);transform-origin:0 0;">花纹板4</div>
<div class="a" style="left:578.5px;top:768.4px;width:60px;text-align:center;transform:scaleX(.9);transform-origin:50% 0;">1</div>
<div class="a" style="left:586.5px;top:768.4px;width:60px;text-align:right;transform:scaleX(.9);transform-origin:100% 0;">53.81</div>
<div class="a" style="left:619.5px;top:768.4px;width:60px;text-align:right;transform:scaleX(.9);transform-origin:100% 0;">53.81</div>
<div class="a" style="left:681px;top:768.4px;width:26px;height:9px;overflow:hidden"><div style="position:absolute;right:0;top:0;transform:scaleX(.9);transform-origin:100% 0">3.34</div></div>
<div class="a" style="left:463px;top:777.9px;transform:scaleX(.9);transform-origin:0 0;">TB--2</div>
<div class="a" style="left:491.5px;top:777.9px;transform:scaleX(.9);transform-origin:0 0;">PL4*1500</div>
<div class="a" style="left:551px;top:777.9px;transform:scaleX(.9);transform-origin:0 0;">280.0</div>
<div class="a" style="left:576px;top:777.9px;transform:scaleX(.9);transform-origin:0 0;">花纹板</div>
<div class="a" style="left:578.5px;top:777.9px;width:60px;text-align:center;transform:scaleX(.9);transform-origin:50% 0;">1</div>
<div class="a" style="left:586.5px;top:777.9px;width:60px;text-align:right;transform:scaleX(.9);transform-origin:100% 0;">0.00</div>
<div class="a" style="left:619.5px;top:777.9px;width:60px;text-align:right;transform:scaleX(.9);transform-origin:100% 0;">0.00</div>
<div class="a" style="left:681px;top:777.9px;width:26px;height:9px;overflow:hidden"><div style="position:absolute;right:0;top:0;transform:scaleX(.9);transform-origin:100% 0">0.87</div></div>
<div class="a" style="left:463px;top:787.5px;transform:scaleX(.9);transform-origin:0 0;">TB--3</div>
<div class="a" style="left:491.5px;top:787.5px;transform:scaleX(.9);transform-origin:0 0;">PL4*1500</div>
<div class="a" style="left:551px;top:787.5px;transform:scaleX(.9);transform-origin:0 0;">165.2</div>
<div class="a" style="left:576px;top:787.5px;transform:scaleX(.9);transform-origin:0 0;">花纹板</div>
<div class="a" style="left:578.5px;top:787.5px;width:60px;text-align:center;transform:scaleX(.9);transform-origin:50% 0;">1</div>
<div class="a" style="left:586.5px;top:787.5px;width:60px;text-align:right;transform:scaleX(.9);transform-origin:100% 0;">0.00</div>
<div class="a" style="left:619.5px;top:787.5px;width:60px;text-align:right;transform:scaleX(.9);transform-origin:100% 0;">0.00</div>
<div class="a" style="left:681px;top:787.5px;width:26px;height:9px;overflow:hidden"><div style="position:absolute;right:0;top:0;transform:scaleX(.9);transform-origin:100% 0">0.51</div></div>
<div class="a" style="left:463px;top:797.0px;transform:scaleX(.9);transform-origin:0 0;">TB--4</div>
<div class="a" style="left:491.5px;top:797.0px;transform:scaleX(.9);transform-origin:0 0;">PL4*1500</div>
<div class="a" style="left:551px;top:797.0px;transform:scaleX(.9);transform-origin:0 0;">441.2</div>
<div class="a" style="left:576px;top:797.0px;transform:scaleX(.9);transform-origin:0 0;">花纹板</div>
<div class="a" style="left:578.5px;top:797.0px;width:60px;text-align:center;transform:scaleX(.9);transform-origin:50% 0;">13</div>
<div class="a" style="left:586.5px;top:797.0px;width:60px;text-align:right;transform:scaleX(.9);transform-origin:100% 0;">0.00</div>
<div class="a" style="left:619.5px;top:797.0px;width:60px;text-align:right;transform:scaleX(.9);transform-origin:100% 0;">0.00</div>
<div class="a" style="left:681px;top:797.0px;width:26px;height:9px;overflow:hidden"><div style="position:absolute;right:0;top:0;transform:scaleX(.9);transform-origin:100% 0">12.41</div></div>
<div class="a" style="left:470px;top:658px;color:#888;letter-spacing:3px;font-size:7px">版 次</div>
<div class="a" style="left:562px;top:658px;color:#888;letter-spacing:3px;font-size:7px">图 纸 说 明</div>
<div class="a" style="left:680px;top:658px;color:#888;letter-spacing:3px;font-size:7px">日 期</div>
<div class="a" style="left:462.5px;top:668.5px;transform:scaleX(.9);transform-origin:0 0;color:#7e7">构件号 (MEMBER MARK):GT--1</div>
<div class="a" style="left:620px;top:668.5px;transform:scaleX(.9);transform-origin:0 0;color:#7e7">数量 (QTY):</div>
<div class="a" style="left:659.5px;top:668.5px;transform:scaleX(.9);transform-origin:0 0;color:#7e7">总重(kg)</div>
<div class="a" style="left:688px;top:668.5px;transform:scaleX(.9);transform-origin:0 0;color:#f5f">406.25</div>
<div class="a" style="left:446px;top:678px;width:60px;text-align:center;color:#7e7;line-height:6.5px;font-size:7px;transform:scaleX(.9);transform-origin:50% 0">编 号<br>MARK</div>
<div class="a" style="left:490px;top:678px;width:60px;text-align:center;color:#7e7;line-height:6.5px;font-size:7px;transform:scaleX(.9);transform-origin:50% 0">规 格<br>SIZE(mm)</div>
<div class="a" style="left:531.5px;top:678px;width:60px;text-align:center;color:#7e7;line-height:6.5px;font-size:7px;transform:scaleX(.9);transform-origin:50% 0">长度<br>L(mm)</div>
<div class="a" style="left:556px;top:678px;width:60px;text-align:center;color:#7e7;line-height:6.5px;font-size:7px;transform:scaleX(.9);transform-origin:50% 0">等级<br>GRADE</div>
<div class="a" style="left:578.5px;top:678px;width:60px;text-align:center;color:#7e7;line-height:6.5px;font-size:7px;transform:scaleX(.9);transform-origin:50% 0">数量<br>QTY</div>
<div class="a" style="left:603.5px;top:678px;width:60px;text-align:center;color:#7e7;line-height:6.5px;font-size:7px;transform:scaleX(.9);transform-origin:50% 0">单重<br>UNIT WT(kg)</div>
<div class="a" style="left:635px;top:678px;width:60px;text-align:center;color:#7e7;line-height:6.5px;font-size:7px;transform:scaleX(.9);transform-origin:50% 0">总重<br>TOTAL WT(kg)</div>
<div class="a" style="left:664px;top:678px;width:60px;text-align:center;color:#7e7;line-height:6.5px;font-size:7px;transform:scaleX(.9);transform-origin:50% 0">总表面积<br>TOTAL AR(m²)</div>
<div class="a" style="left:586px;top:806.3px;width:60px;text-align:right;transform:scaleX(.9);transform-origin:100% 0;color:#dd9">合计 (Total):406.25</div>
<div class="a" style="left:647px;top:806.3px;width:60px;text-align:right;transform:scaleX(.9);transform-origin:100% 0;">39.2</div>
</div>
<!-- divider -->
<div class="a" style="left:881px;top:87px;width:2px;height:799px;background:#4d4d4d"></div>
<svg width="1800" height="100" style="left:0;top:0"><path d="M877.5,88.5h9l-4.5,4.5z" fill="#6a6a6a"/></svg>

<!-- RIGHT WINDOW -->
<div class="a" style="left:883px;top:87px;width:883px;height:799px;background:linear-gradient(#bfcedc 0px,#d7e4f1 28px,#d6e3f0 29px);border-top:2px solid #5b5b5b;border-right:2px solid #6c6c6c;border-bottom:1px solid #555;border-top-right-radius:6px"></div>
<div class="a" style="left:890px;top:117px;width:868px;height:761px;background:linear-gradient(#ffffff 0%,#fcfcfd 9%,#f3f3f6 22%,#ebeaef 37%,#e6e5eb 46%,#d9d7e2 72%,#cfccda 90%,#cac7d7 100%)"></div>
<!-- VIEW3D -->
<svg width="1800" height="928" style="left:0;top:0" fill="none">
<path d="M1244.6,421.0L1716.0,401.2" stroke="#2a2a2a" stroke-width="1.2" stroke-dasharray="20,13,5,13"/>
<path d="M1729.0,400.6L1749.5,400.4" stroke="#222" stroke-width="1.3" />
<path d="M890.2,780.0L1240.0,766.0" stroke="#2a2a2a" stroke-width="1.2" stroke-dasharray="20,13,5,13"/>
<path d="M1690.0,747.3L1756.5,744.6" stroke="#222" stroke-width="1.2" stroke-dasharray="18,9,3,9"/>
<path d="M890.5,552.6L953.6,859.5" stroke="#222" stroke-width="1" stroke-dasharray="6,6,1.5,6"/>
<path d="M889.0,780.5L907.0,780.2" stroke="#222" stroke-width="1.1" />
<polygon points="1080.4,403.3 1493.9,165.4 1513.9,205.4 1100.4,443.3" fill="#b7cb6d"/>
<path d="M1080.4,403.3L1493.9,165.4" stroke="#9db055" stroke-width="2.6" />
<path d="M1081.4,405.3L1494.9,167.4" stroke="#a9bd60" stroke-width="1" />
<polygon points="1085.2,405.5 1117.7,404.9 1129.7,455.6 1097.2,474.3" fill="#8c9a50"/>
<path d="M1085.2,405.5L1115.2,404.9" stroke="#7f8c48" stroke-width="0.8" />
<polygon points="1114.8,388.6 1147.2,388.0 1159.2,438.6 1126.7,457.3" fill="#8c9a50"/>
<path d="M1114.8,388.6L1144.8,388.0" stroke="#7f8c48" stroke-width="0.8" />
<polygon points="1144.3,371.8 1176.8,371.2 1188.8,421.6 1156.2,440.3" fill="#8c9a50"/>
<path d="M1144.3,371.8L1174.3,371.2" stroke="#7f8c48" stroke-width="0.8" />
<polygon points="1173.9,354.9 1206.3,354.3 1218.3,404.6 1185.8,423.3" fill="#8c9a50"/>
<path d="M1173.9,354.9L1203.9,354.3" stroke="#7f8c48" stroke-width="0.8" />
<polygon points="1203.4,338.1 1235.9,337.5 1247.8,387.6 1215.3,406.3" fill="#8c9a50"/>
<path d="M1203.4,338.1L1233.4,337.5" stroke="#7f8c48" stroke-width="0.8" />
<polygon points="1233.0,321.2 1265.4,320.6 1277.3,370.6 1244.8,389.3" fill="#8c9a50"/>
<path d="M1233.0,321.2L1263.0,320.6" stroke="#7f8c48" stroke-width="0.8" />
<polygon points="1262.5,304.4 1295.0,303.8 1306.9,353.6 1274.3,372.3" fill="#8c9a50"/>
<path d="M1262.5,304.4L1292.5,303.8" stroke="#7f8c48" stroke-width="0.8" />
<polygon points="1292.0,287.5 1324.5,286.9 1336.4,336.6 1303.9,355.3" fill="#8c9a50"/>
<path d="M1292.0,287.5L1322.0,286.9" stroke="#7f8c48" stroke-width="0.8" />
<polygon points="1321.6,270.7 1354.1,270.1 1365.9,319.7 1333.4,338.3" fill="#8c9a50"/>
<path d="M1321.6,270.7L1351.6,270.1" stroke="#7f8c48" stroke-width="0.8" />
<polygon points="1351.2,253.8 1383.6,253.2 1395.4,302.7 1362.9,321.4" fill="#8c9a50"/>
<path d="M1351.2,253.8L1381.2,253.2" stroke="#7f8c48" stroke-width="0.8" />
<polygon points="1380.7,237.0 1413.2,236.4 1425.0,285.7 1392.4,304.4" fill="#8c9a50"/>
<path d="M1380.7,237.0L1410.7,236.4" stroke="#7f8c48" stroke-width="0.8" />
<polygon points="1410.2,220.1 1442.7,219.5 1454.5,268.7 1422.0,287.4" fill="#8c9a50"/>
<path d="M1410.2,220.1L1440.2,219.5" stroke="#7f8c48" stroke-width="0.8" />
<polygon points="1439.8,203.3 1472.3,202.7 1484.0,251.7 1451.5,270.4" fill="#8c9a50"/>
<path d="M1439.8,203.3L1469.8,202.7" stroke="#7f8c48" stroke-width="0.8" />
<polygon points="1469.4,186.4 1501.8,185.8 1513.5,234.7 1481.0,253.4" fill="#8c9a50"/>
<path d="M1469.4,186.4L1499.4,185.8" stroke="#7f8c48" stroke-width="0.8" />
<polygon points="1114.8,388.6 1118.0,388.6 1129.9,455.5 1126.7,457.3" fill="#9fb05c"/>
<path d="M1114.8,388.6L1126.7,457.3" stroke="#56622c" stroke-width="1" />
<path d="M1118.0,389.6L1129.9,455.5" stroke="#56622c" stroke-width="1" />
<polygon points="1144.3,371.8 1147.5,371.8 1159.4,438.5 1156.2,440.3" fill="#9fb05c"/>
<path d="M1144.3,371.8L1156.2,440.3" stroke="#56622c" stroke-width="1" />
<path d="M1147.5,372.8L1159.4,438.5" stroke="#56622c" stroke-width="1" />
<polygon points="1173.9,354.9 1177.1,354.9 1189.0,421.5 1185.8,423.3" fill="#9fb05c"/>
<path d="M1173.9,354.9L1185.8,423.3" stroke="#56622c" stroke-width="1" />
<path d="M1177.1,355.9L1189.0,421.5" stroke="#56622c" stroke-width="1" />
<polygon points="1203.4,338.1 1206.6,338.1 1218.5,404.5 1215.3,406.3" fill="#9fb05c"/>
<path d="M1203.4,338.1L1215.3,406.3" stroke="#56622c" stroke-width="1" />
<path d="M1206.6,339.1L1218.5,404.5" stroke="#56622c" stroke-width="1" />
<polygon points="1233.0,321.2 1236.2,321.2 1248.0,387.5 1244.8,389.3" fill="#9fb05c"/>
<path d="M1233.0,321.2L1244.8,389.3" stroke="#56622c" stroke-width="1" />
<path d="M1236.2,322.2L1248.0,387.5" stroke="#56622c" stroke-width="1" />
<polygon points="1262.5,304.4 1265.7,304.4 1277.5,370.5 1274.3,372.3" fill="#9fb05c"/>
<path d="M1262.5,304.4L1274.3,372.3" stroke="#56622c" stroke-width="1" />
<path d="M1265.7,305.4L1277.5,370.5" stroke="#56622c" stroke-width="1" />
<polygon points="1292.0,287.5 1295.2,287.5 1307.1,353.5 1303.9,355.3" fill="#9fb05c"/>
<path d="M1292.0,287.5L1303.9,355.3" stroke="#56622c" stroke-width="1" />
<path d="M1295.2,288.5L1307.1,353.5" stroke="#56622c" stroke-width="1" />
<polygon points="1321.6,270.7 1324.8,270.7 1336.6,336.5 1333.4,338.3" fill="#9fb05c"/>
<path d="M1321.6,270.7L1333.4,338.3" stroke="#56622c" stroke-width="1" />
<path d="M1324.8,271.7L1336.6,336.5" stroke="#56622c" stroke-width="1" />
<polygon points="1351.2,253.8 1354.4,253.8 1366.1,319.6 1362.9,321.4" fill="#9fb05c"/>
<path d="M1351.2,253.8L1362.9,321.4" stroke="#56622c" stroke-width="1" />
<path d="M1354.4,254.8L1366.1,319.6" stroke="#56622c" stroke-width="1" />
<polygon points="1380.7,237.0 1383.9,237.0 1395.6,302.6 1392.4,304.4" fill="#9fb05c"/>
<path d="M1380.7,237.0L1392.4,304.4" stroke="#56622c" stroke-width="1" />
<path d="M1383.9,238.0L1395.6,302.6" stroke="#56622c" stroke-width="1" />
<polygon points="1410.2,220.1 1413.5,220.1 1425.2,285.6 1422.0,287.4" fill="#9fb05c"/>
<path d="M1410.2,220.1L1422.0,287.4" stroke="#56622c" stroke-width="1" />
<path d="M1413.5,221.1L1425.2,285.6" stroke="#56622c" stroke-width="1" />
<polygon points="1439.8,203.3 1443.0,203.3 1454.7,268.6 1451.5,270.4" fill="#9fb05c"/>
<path d="M1439.8,203.3L1451.5,270.4" stroke="#56622c" stroke-width="1" />
<path d="M1443.0,204.3L1454.7,268.6" stroke="#56622c" stroke-width="1" />
<polygon points="1469.4,186.4 1472.6,186.4 1484.2,251.6 1481.0,253.4" fill="#9fb05c"/>
<path d="M1469.4,186.4L1481.0,253.4" stroke="#56622c" stroke-width="1" />
<path d="M1472.6,187.4L1484.2,251.6" stroke="#56622c" stroke-width="1" />
<path d="M1085.2,405.5L1097.2,474.3" stroke="#56622c" stroke-width="1" />
<polygon points="899.0,417.3 916.5,416.0 915.1,408.9 1080.4,403.3 1085.2,405.5 1097.2,474.3 1096.5,474.7 913.7,481.7" fill="#8c9a50"/>
<polygon points="915.1,408.9 1080.4,403.3 1083.0,406.5 916.0,412.5" fill="#96a656"/>
<path d="M915.1,409.5L1080.4,403.8" stroke="#9db055" stroke-width="1.6" />
<path d="M917.0,412.6L1083.0,406.8" stroke="#76833e" stroke-width="1" stroke-dasharray="8,6"/>
<path d="M899.0,417.3L913.7,481.7" stroke="#56622c" stroke-width="1.2" />
<path d="M899.0,417.3L916.5,416.0" stroke="#9db055" stroke-width="1.2" />
<polygon points="1096.5,474.7 1508.6,237.5 1514.2,258.5 1102.0,497.0" fill="#b7cb6d"/>
<path d="M1095.5,473.7L1507.6,236.5" stroke="#8fa24a" stroke-width="1.8" />
<path d="M1102.5,495.8L1514.0,257.3" stroke="#9db156" stroke-width="2.4" />
<polygon points="913.7,481.7 1096.5,474.7 1102.0,497.0 913.7,504.0" fill="#b7cb6d"/>
<path d="M913.7,481.7L1096.5,474.7" stroke="#8fa24a" stroke-width="1.8" />
<path d="M916.0,483.5L1096.0,476.5" stroke="#6d7a38" stroke-width="1" stroke-dasharray="8,9"/>
<path d="M1096.5,474.7L1102.0,497.0" stroke="#9fb35e" stroke-width="1" />
<path d="M913.7,504.0L1102.0,497.0" stroke="#a3b763" stroke-width="1.2" />
<path d="M918,484.8l2.2,2.3l-2.2,2.3l-2.2,-2.3z M918,492l2.2,2.3l-2.2,2.3l-2.2,-2.3z" fill="#e07818"/>
<polygon points="1493.9,165.4 1614.4,160.5 1629.8,233.3 1508.6,237.5 1512.8,236.1 1497.4,169.6" fill="#8c9a50"/>
<polygon points="1493.9,165.4 1614.4,160.5 1615.0,164.5 1497.4,169.6" fill="#96a656"/>
<path d="M1493.9,165.8L1614.4,160.9" stroke="#9db055" stroke-width="2" />
<path d="M1498.0,169.2L1614.0,164.3" stroke="#76833e" stroke-width="1" stroke-dasharray="8,6"/>
<path d="M1614.4,160.5L1629.8,233.3" stroke="#56622c" stroke-width="1.2" />
<path d="M1497.4,169.6L1512.8,236.1" stroke="#56622c" stroke-width="1" />
<path d="M1500.6,169.6L1516.0,236.1" stroke="#56622c" stroke-width="1" />
<polygon points="1493.9,165.4 1497.4,169.6 1468.7,186.4 1469.4,186.5" fill="#b7cb6d"/>
<polygon points="1508.6,237.5 1629.8,233.3 1629.8,246.0 1613.0,246.6 1613.0,255.7 1514.2,258.5" fill="#b7cb6d"/>
<path d="M1508.6,237.5L1629.8,233.3" stroke="#8fa24a" stroke-width="1.8" />
<path d="M1515.0,239.5L1628.0,235.5" stroke="#6d7a38" stroke-width="1" stroke-dasharray="8,9"/>
<path d="M1508.6,237.5L1514.2,258.5" stroke="#9fb35e" stroke-width="1" />
<circle cx="1355" cy="350.7" r="36" stroke="#ee22ee" stroke-width="1.1" stroke-dasharray="4,4"/>
<path d="M1333.8,333.7L1324.6,324.5" stroke="#ee33ee" stroke-width="0.9"/>
<path d="M1337.7,329.1L1328.5,319.9" stroke="#ee33ee" stroke-width="0.9"/>
<path d="M1328.5,325.6L1332.4,321.7" stroke="#ee33ee" stroke-width="0.8"/>
<path d="M1372.0,329.5L1381.2,320.3" stroke="#ee33ee" stroke-width="0.9"/>
<path d="M1376.6,333.4L1385.8,324.2" stroke="#ee33ee" stroke-width="0.9"/>
<path d="M1380.1,324.2L1384.0,328.1" stroke="#ee33ee" stroke-width="0.8"/>
<path d="M1376.2,367.7L1385.4,376.9" stroke="#ee33ee" stroke-width="0.9"/>
<path d="M1372.3,372.3L1381.5,381.5" stroke="#ee33ee" stroke-width="0.9"/>
<path d="M1381.5,375.8L1377.6,379.7" stroke="#ee33ee" stroke-width="0.8"/>
<path d="M1338.0,371.9L1328.8,381.1" stroke="#ee33ee" stroke-width="0.9"/>
<path d="M1333.4,368.0L1324.2,377.2" stroke="#ee33ee" stroke-width="0.9"/>
<path d="M1329.9,377.2L1326.0,373.3" stroke="#ee33ee" stroke-width="0.8"/>
<rect x="980.5" y="526" width="101.5" height="79.5" rx="2" stroke="#e82a2a" stroke-width="2.2"/>
<path d="M1018.8,552.6L1027.2,543.5L1036.4,552.6L1046.1,562L1055.8,552.6" stroke="#f4a04a" stroke-width="2"/>
<path d="M1036.4,537V569.5M1018.5,552.6H1055" stroke="#fff" stroke-width="1.6"/>
<defs><linearGradient id="sh" x1="0" x2="1"><stop offset="0" stop-color="#9a9a9a"/><stop offset="0.5" stop-color="#e0e0e0"/><stop offset="1" stop-color="#8a8a8a"/></linearGradient></defs>
<rect x="1702.5" y="828" width="6.5" height="24" fill="url(#sh)"/>
<rect x="1707" y="846.5" width="26" height="3.5" fill="#c8c0c4"/>
<path d="M1698.7,829.4L1705.5,814L1712.2,829.4Q1705.5,832 1698.7,829.4Z" fill="#0a10c0"/>
<path d="M1731.6,843.4L1745.7,848.3L1731.6,852Z" fill="#12a012"/>
<path d="M1701.5,860L1708,856.3L1714.4,859.5L1712,866L1707,868.2L1702,865Z" fill="#c00a0a"/>
<path d="M1711,813H1720L1711,822.5H1720.5" stroke="#2233dd" stroke-width="1"/>
<path d="M1738.5,835L1742,839.5L1745.5,835M1742,839.5V844" stroke="#22bb22" stroke-width="0.9"/>
<path d="M1713,849L1722,858.5M1722,849L1713,858.5" stroke="#e33" stroke-width="0.9"/>
<path d="M1753,118L1757,133" stroke="#222" stroke-width="0.8" stroke-dasharray="3,2"/>
</svg>
<div class="a" style="left:1742px;top:121px;font-size:12px;font-weight:bold;color:#111;letter-spacing:-2px">IB</div>
<div class="a" style="left:894px;top:420px;font-family:'Liberation Sans',sans-serif;font-size:14px;font-weight:bold;color:#111;line-height:14px;font-weight:normal">21</div>
<div class="a" style="left:1738px;top:386px;font-family:'Liberation Sans',sans-serif;font-size:14px;font-weight:bold;color:#111;line-height:14px">21</div>
<div class="a" style="left:896px;top:766px;font-family:'Liberation Sans',sans-serif;font-size:14px;font-weight:bold;color:#111;line-height:14px;font-weight:normal">22</div>
<div class="a" style="left:1737px;top:731px;font-family:'Liberation Sans',sans-serif;font-size:14px;font-weight:bold;color:#111;line-height:14px;font-weight:normal">22</div>
<div class="a" style="left:894px;top:537px;font-family:'Liberation Sans',sans-serif;font-size:14px;font-weight:bold;color:#111;line-height:14px;font-size:13px;font-weight:normal">A</div>
<div class="a" style="left:944px;top:856px;font-family:'Liberation Sans',sans-serif;font-size:14px;font-weight:bold;color:#111;line-height:14px;font-size:13px;font-weight:normal">A</div>
<div class="a" style="left:919px;top:649.5px;font-size:19px;letter-spacing:0.55px;line-height:26px;color:#ff3a30;-webkit-text-stroke:0.2px #ff3a30">点击之后<br>模型区域进去可选点状态<br>然后我们去选择至少两个点起步</div>
<!-- /VIEW3D -->
<!-- DIALOG -->
<div class="a" style="left:1237px;top:477px;width:454px;height:320px;border-radius:7px;background:#fff;box-shadow:0 10px 34px rgba(40,40,60,0.5),0 0 0 1px rgba(120,120,140,0.25);overflow:hidden">
  <div class="a" style="left:0;top:0;width:454px;height:28px;background:#eef2f8"></div>
</div>
<svg width="1800" height="928" style="left:0;top:0" fill="none">
  <rect x="1245.5" y="484" width="14" height="13.5" fill="#fff"/>
  <path d="M1248,488.5h6M1248,491h8M1249,493.5h6" stroke="#3a78c8" stroke-width="1.4"/>
  <path d="M1249,486.5l4,-1l2,2" stroke="#5a9ae0" stroke-width="1"/>
  <path d="M1580,490.5h9.5" stroke="#222" stroke-width="1"/>
  <rect x="1622.5" y="485.5" width="9" height="9" stroke="#222" stroke-width="1"/>
  <path d="M1665,485.5l9.5,9.5M1674.5,485.5l-9.5,9.5" stroke="#222" stroke-width="1.1"/>
  <rect x="1257" y="526" width="12.5" height="12" stroke="#333" stroke-width="1" fill="#fff"/>
  <path d="M1259.5,531.5l2.5,3l5,-6.5" stroke="#111" stroke-width="1.3"/>
  <rect x="1257" y="562.5" width="12.5" height="12" stroke="#333" stroke-width="1" fill="#fff"/>
  <path d="M1259.5,568l2.5,3l5,-6.5" stroke="#111" stroke-width="1.3"/>
  <rect x="1257" y="599.5" width="12.5" height="12" stroke="#333" stroke-width="1" fill="#fff"/>
  <rect x="1596.5" y="630.5" width="80" height="38.5" fill="#c6e4f6" stroke="#4a86c2" stroke-width="1"/>
</svg>
<div class="a" style="left:1265px;top:483px;font-size:11.5px;line-height:14px;color:#222">坐标标注</div>
<div class="a" style="left:1275px;top:524px;font-size:14.5px;line-height:16px;color:#222">绝对坐标</div>
<div class="a" style="left:1275px;top:561px;font-size:14.5px;line-height:16px;color:#222">图纸坐标</div>
<div class="a" style="left:1275px;top:598px;font-size:14.5px;line-height:16px;color:#222">原点坐标</div>
<div class="a" style="left:1606px;top:641px;font-size:15px;line-height:17px;color:#f4f9fd">标注坐标</div>
<!-- /DIALOG -->

<div class="t" style="left:910px;top:100.5px;font-size:12.5px;line-height:13px;color:#9b9b9b">View 1 - 3D</div>

<div class="a" style="left:0;top:887px;width:1800px;height:2px;background:#dedde3"></div>

<!-- right panel -->
<div class="a" style="left:1768px;top:88px;width:2px;height:800px;background:#dcdbe1"></div>

<!-- CHROME -->
<svg width="1800" height="928" style="left:0;top:0" fill="none">
  <defs>
    <linearGradient id="btn" x1="0" y1="0" x2="0" y2="1"><stop offset="0" stop-color="#c9d6e4"/><stop offset="1" stop-color="#d9e4ef"/></linearGradient>
  </defs>
  <!-- left window icon -->
  <rect x="8.5" y="99" width="14.5" height="13.5" fill="#e9ecf2" opacity="0.7"/>
  <path d="M8.2,108 L12.5,100 L23.5,100 L19.5,108 Z" fill="#dc2630"/>
  <path d="M8.2,108 L12.5,100 L14.5,102 L16,104.5 L15.5,108 Z" fill="#b00a14"/>
  <path d="M10,108.3 L15.2,108.3 L13.5,111.8 Z" fill="#1f4a9a"/>
  <!-- buttons left -->
  <g stroke="#8fa3bb" stroke-width="1" fill="url(#btn)">
    <rect x="779.5" y="97.5" width="29" height="16.5" rx="2.5"/>
    <rect x="811.5" y="97.5" width="29" height="16.5" rx="2.5"/>
    <rect x="843.5" y="97.5" width="29" height="16.5" rx="2.5"/>
    <rect x="1663" y="97.5" width="28.5" height="16" rx="2.5"/>
    <rect x="1695" y="97.5" width="28.5" height="16" rx="2.5"/>
    <rect x="1727" y="97.5" width="28.5" height="16" rx="2.5"/>
  </g>
  <g stroke="#3a3a3a" stroke-width="1" fill="#f4f4f4">
    <rect x="788.5" y="105" width="10" height="4" rx="1.5"/>
    <rect x="820.5" y="101.8" width="10" height="8" rx="1.5"/>
    <rect x="1672.5" y="104.8" width="10" height="4" rx="1.5"/>
    <rect x="1703.5" y="101.5" width="10" height="8" rx="1.5"/>
  </g>
  <rect x="823" y="104.3" width="5" height="3" fill="none" stroke="#3a3a3a" stroke-width="0.9"/>
  <rect x="1706" y="104" width="5" height="3" fill="none" stroke="#3a3a3a" stroke-width="0.9"/>
  <g stroke="#3a3a3a" stroke-width="3.6" stroke-linecap="round"><path d="M852.5,102l9,7.5M861.5,102l-9,7.5M1736.5,101.5l9,7.5M1745.5,101.5l-9,7.5"/></g>
  <g stroke="#f8f8f8" stroke-width="1.8" stroke-linecap="round"><path d="M852.5,102l9,7.5M861.5,102l-9,7.5M1736.5,101.5l9,7.5M1745.5,101.5l-9,7.5"/></g>
  <!-- right window icon -->
  <rect x="892" y="99.5" width="13.5" height="12" fill="#e6e8ea" stroke="#b8bcc2" stroke-width="1"/>
  <rect x="893.5" y="101.5" width="4.5" height="9" fill="#2a8a6a"/>
  <rect x="899" y="101.5" width="1.5" height="9" fill="#ffffff"/>
  <rect x="902" y="101.5" width="2" height="4" fill="#4aa0d0"/>
  <!-- right panel -->
  <path d="M1769.5,117.5H1800M1769.5,145.5H1800M1769.5,172.5H1800M1769.5,199.5H1800M1769.5,227.5H1800" stroke="#dcdbe1" stroke-width="1"/>
  <path d="M1783,97.5l5.5,4.8l-5.5,4.8" stroke="#31303f" stroke-width="1.7"/>
  <g fill="#31303f">
    <path d="M1779.5,130l6.3,-5.3l6.5,5.3z"/>
    <rect x="1780" y="131" width="12" height="1.4"/>
    <rect x="1780.8" y="133" width="1.5" height="4.5"/><rect x="1783.8" y="133" width="1.5" height="4.5"/><rect x="1786.8" y="133" width="1.5" height="4.5"/><rect x="1789.8" y="133" width="1.5" height="4.5"/>
    <rect x="1779" y="138" width="13.5" height="1.5"/>
    <rect x="1781.5" y="156" width="3" height="8.5"/><rect x="1785.5" y="156" width="6" height="8.5"/>
    <rect x="1778.5" y="207" width="6.5" height="6.5"/>
    <path d="M1786.8,213.5l3.4,-6.5l3.4,6.5z"/>
    <circle cx="1781.7" cy="218.7" r="3.2"/>
    <path d="M1786.8,218.7h6.8M1790.2,215.3v6.8" stroke="#31303f" stroke-width="1.9"/>
  </g>
  <rect x="1778.8" y="151.8" width="14.5" height="14.5" stroke="#31303f" stroke-width="1.5"/>
  <path d="M1779,154.5h14" stroke="#31303f" stroke-width="1.3"/>
  <circle cx="1785.8" cy="186.5" r="6.8" stroke="#31303f" stroke-width="1.5"/>
  <path d="M1781.5,182.5 l3,0.5 l1,2.5 l-2,2 l0.5,3 M1787.5,180.5 l0.5,2 l2,1 l2,-0.5 M1788.5,187.5 l2,1 l0.5,2.5 l-2,2" stroke="#31303f" stroke-width="1.4"/>
</svg>
<!-- bottom toolbar -->
<div class="a" style="left:3px;top:889px;width:334px;height:28px;border:1px solid #e4e3e8;border-radius:2px"></div>
<div class="a" style="left:339px;top:889px;width:279px;height:28px;border:1px solid #e4e3e8;border-radius:2px"></div>
<svg width="1800" height="928" style="left:0;top:0" fill="none">
  <g fill="#d3d2d8">
    <rect x="5" y="894" width="18" height="19"/><rect x="26" y="894" width="18" height="19"/><rect x="46.5" y="894" width="18" height="19"/><rect x="67" y="894" width="18" height="19"/><rect x="87.5" y="894" width="18" height="19"/><rect x="108" y="894" width="18" height="19"/><rect x="129" y="894" width="18" height="19"/><rect x="149.5" y="894" width="18" height="19"/><rect x="170.5" y="894" width="18" height="19"/><rect x="211.5" y="894" width="18" height="19"/><rect x="252.5" y="894" width="18" height="19"/><rect x="273.5" y="894" width="18" height="19"/>
    <rect x="344" y="893" width="19" height="18.5"/><rect x="365" y="893" width="18.5" height="18.5"/><rect x="406" y="893" width="18.5" height="18.5"/><rect x="427" y="893" width="18.5" height="18.5"/><rect x="447.5" y="893" width="18.5" height="18.5"/><rect x="468" y="893" width="18.5" height="18.5"/><rect x="489" y="893" width="18.5" height="18.5"/><rect x="533.5" y="893" width="18.5" height="18.5"/><rect x="554.5" y="893" width="18.5" height="18.5"/>
  </g>
  <g stroke="#31303f" stroke-width="1.4">
    <path d="M10.5,897.5v10l2.5,-2.5l2,4l1.8,-1l-2,-4h3.5z" fill="#31303f" stroke="none"/>
    <path d="M30,908.5l10,-10"/>
    <text x="48.5" y="909" font-family="Liberation Serif" font-weight="bold" font-size="15" fill="#31303f" stroke="none">T</text>
    <path d="M71,904.5q3,-2 9.5,-1.5M72.5,907l2,-3" stroke-width="1.6"/>
    <rect x="91" y="897.5" width="11" height="11" fill="#1d8ad6" stroke="none"/>
    <rect x="111.5" y="897.5" width="11" height="11" stroke-width="1.3"/><rect x="115.5" y="901.5" width="3" height="3" fill="#31303f" stroke="none"/>
    <path d="M132,908l2,-2M134.5,905l2,-2M138,903l3,-3l2.5,3" stroke-width="1.2"/>
    <rect x="152.5" y="898" width="12" height="10" stroke-width="1.3"/><path d="M152.5,900.5h12" stroke-width="2"/>
    <path d="M173.5,903h11M175.5,899.5v7.5M178.5,899.5v7.5M181.5,899.5v7.5" stroke-width="1.3"/>
    <path d="M195,903h10M195,900v6M205,900v6" stroke-width="1.3"/>
    <path d="M214.5,899h11M214.5,902h11M214.5,905h11M214.5,908h11M216,897.5v12M219.5,897.5v12M223,897.5v12" stroke-width="0.9"/>
    <path d="M236,899h8M236,902h8M236,905h8M236,908h8M237.5,897.5v12M240.5,897.5v12" stroke-width="0.9"/><path d="M243,897.5v12" stroke="#f08a24" stroke-width="1.2"/>
    <circle cx="264" cy="901" r="3.5" stroke-width="1.3"/><path d="M261.5,903.5l-4,4h-2" stroke-width="1.3"/>
    <path d="M279.5,897.5v4M285.5,897.5v4" stroke-width="1.2"/><path d="M278,901.5h9v3l-2,3h-5l-2,-3z" fill="#31303f" stroke="none"/><path d="M282.5,907.5v3" stroke-width="1.5"/>
    <circle cx="303" cy="903" r="4.8" fill="#7a7a86" stroke="none"/>
    <path d="M317,903q6,-5.5 12,0q-6,5.5 -12,0z" fill="#31303f" stroke="none"/><circle cx="323" cy="903" r="1.5" fill="#f2f1f6" stroke="none"/>
    <rect x="347.5" y="896.5" width="11" height="11" stroke-width="1.5"/><path d="M348,897l10,10M358,897l-10,10" stroke-width="1.3"/>
    <rect x="368.5" y="896.5" width="11" height="11" stroke-width="1.5"/>
    <circle cx="394.5" cy="902" r="5" stroke-width="1.3"/>
    <path d="M409.5,907.5l5.5,-9.5l5.5,9.5z" stroke-width="1.3"/>
    <path d="M430.5,897l10,10M440.5,897l-10,10" stroke-width="1.3"/>
    <path d="M450.5,907.5h8v-10" stroke-width="1.4"/><path d="M450.5,907.5" />
    <path d="M471.5,897.5h9l-4.5,5l4.5,5h-9l4.5,-5z" stroke-width="1.3"/>
    <path d="M491.5,902h3M494.5,897.5h9l-4.5,5l4.5,5h-9l4.5,-5z" stroke-width="1.2"/>
    <path d="M513,904.5l4,-4l4.5,4" stroke-width="1.4"/>
    <rect x="536.5" y="896.5" width="11" height="11" fill="#4a4958" stroke="none"/><rect x="539.5" y="899.5" width="5" height="5" fill="#f5a030" stroke="none"/>
    <rect x="558.5" y="896.5" width="11" height="11" fill="#4a4958" stroke="none"/>
    <path d="M557.5,895.5h3M557.5,895.5v3M569.5,895.5h-3M569.5,895.5v3M557.5,908.5h3M557.5,908.5v-3M569.5,908.5h-3M569.5,908.5v-3" stroke="#f07a18" stroke-width="1.8"/>
    <path d="M578,899.5h7M579.5,899.5v9M583.5,899.5v4" stroke-width="1.5"/><circle cx="587.5" cy="898.5" r="1.6" fill="#31303f" stroke="none"/><path d="M587.5,899v4" stroke-width="1.3"/>
    <path d="M598,902q6,-5.5 12,0q-6,5.5 -12,0z" fill="#31303f" stroke="none"/><circle cx="604" cy="902" r="1.5" fill="#f2f1f6" stroke="none"/>
  </g>
  <path d="M530.5,894v17" stroke="#dcdbe1" stroke-width="1"/>
</svg>
<div class="a" style="left:0;top:916px;width:1800px;height:12px;overflow:hidden">
  <div class="t" style="left:0px;top:4.5px;font-size:11px;letter-spacing:0.1px;line-height:14px;color:#222">选择完成后鼠标中键</div>
  <div class="t" style="left:1301px;top:3px;font-size:12px;line-height:14px;color:#222">d</div>
  <div class="t" style="left:1355px;top:3px;font-size:12px;line-height:14px;color:#222">0</div>
  <div class="t" style="left:1383px;top:3px;font-size:12px;line-height:14px;color:#222">Pan</div>
  <div class="t" style="left:1430px;top:3px;font-size:12px;line-height:14px;color:#222">目前的状态 1 状态 1</div>
  <div class="t" style="left:1643px;top:3px;font-size:12px;line-height:14px;color:#222">0 : 0 选择的物体</div>
</div>
<!-- /CHROME -->

</body></html>
